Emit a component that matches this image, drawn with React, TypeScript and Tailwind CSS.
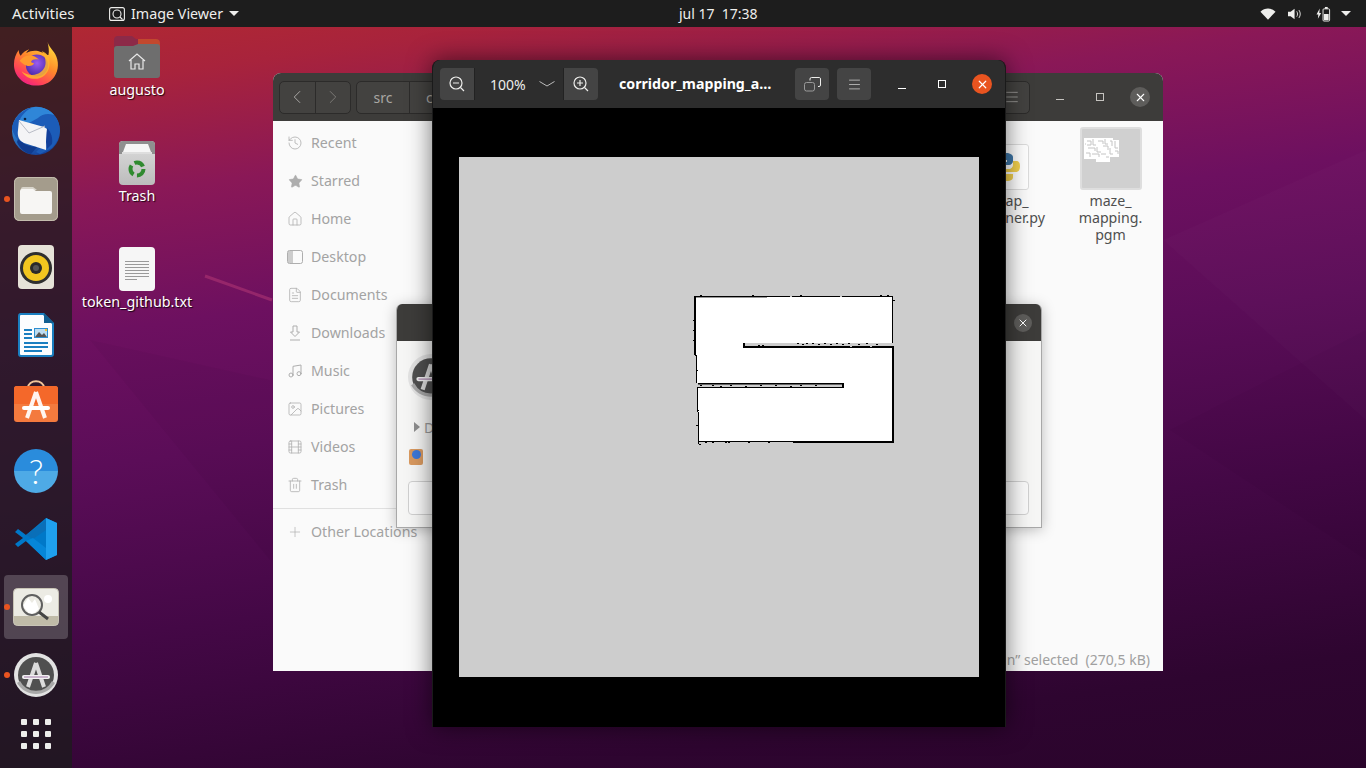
import { History, Star, Home, FileText, Music, Image as ImageIcon, Film, Trash2, Plus, ChevronLeft, ChevronRight, X, Menu } from "lucide-react";

const FONT = "font-['Noto_Sans','Liberation_Sans',sans-serif]";

function Firefox() {
  return (
    <svg width="46" height="47" viewBox="0 0 48 48">
      <defs>
        <linearGradient id="ff1" x1="0.8" y1="0" x2="0.2" y2="1"><stop offset="0" stopColor="#ffdf3d" /><stop offset="0.45" stopColor="#ff8a2a" /><stop offset="0.8" stopColor="#ff3d5c" /><stop offset="1" stopColor="#e8198f" /></linearGradient>
        <radialGradient id="ff2" cx="0.5" cy="0.4" r="0.6"><stop offset="0" stopColor="#9a5cf0" /><stop offset="1" stopColor="#4a2aa8" /></radialGradient>
      </defs>
      <path d="M36 1c1 5 5 8 8 13 4 7 4 17-1 24-5 7-12 9-19 9C11 47 1 37 1 25 1 19 3 14 6 10c0 3 1 5 2 6 2-4 6-6 9-7-2 2-3 3-3 4 5-3 11-3 15-1 4 1 7 4 8 3 1-4 0-9-1-14z" fill="url(#ff1)" />
      <circle cx="25" cy="26" r="11.5" fill="url(#ff2)" />
      <path d="M7 21c3-4 8-6 13-5 4 1 6 3 7 4-4-1-7 0-8 2-1 1 3 2 3 2-2 3-6 3-8 2-3-1-5-3-7-5z" fill="#ff9a2e" />
      <path d="M30 11c6 2 9 8 8 15-1 9-8 14-15 14-6 0-11-3-14-8 5 4 11 5 16 3 6-2 9-7 9-12 0-5-2-9-4-12z" fill="#ffb52e" opacity="0.85" />
    </svg>
  );
}

function Thunderbird() {
  return (
    <svg width="50" height="50" viewBox="0 0 50 50">
      <defs>
        <linearGradient id="tb1" x1="0.3" y1="0" x2="0.7" y2="1"><stop offset="0" stopColor="#3fa4e8" /><stop offset="1" stopColor="#123f9a" /></linearGradient>
      </defs>
      <circle cx="25" cy="25" r="24" fill="url(#tb1)" />
      <path d="M25 1c10 0 20 6 23 17 2 9-1 18-7 24-4 2-8 4-12 6l-4-2 6-6-20-3C6 34 2 28 1 22 3 10 14 1 25 1z" fill="#1c5cb8" />
      <path d="M8 17c1-7 8-14 15-16 8-1 16 3 20 8-6-2-12-1-16 3l-9 5z" fill="#2f86d8" />
      <path d="M8 14l25 7 3 2-1 21-22-7C8 35 6 30 7 24z" fill="#f4f4f6" />
      <path d="M8 15l10 12 16-7" fill="none" stroke="#b9bcc6" strokeWidth="1" />
      <path d="M36 22c4 4 6 10 5 16l-5 5-1-7z" fill="#123f9a" />
      <path d="M7 33c5 5 12 8 19 8l-6 7C13 47 8 41 6 36z" fill="#0f3b8f" />
      <circle cx="14" cy="13" r="1.3" fill="#0b2244" />
    </svg>
  );
}

function FilesIcon() {
  return (
    <svg width="44" height="44" viewBox="0 0 44 44">
      <rect x="0" y="0" width="44" height="44" rx="5" fill="#a49c8c" />
      <rect x="0.5" y="0.5" width="43" height="43" rx="5" fill="none" stroke="#c4bdae" />
      <path d="M7 12a2 2 0 0 1 2-2h10l4 3H7z" fill="#d9d5cc" />
      <path d="M6 14a2 2 0 0 1 2-2h11l3 2h14a2 2 0 0 1 2 2v19a2 2 0 0 1-2 2H8a2 2 0 0 1-2-2z" fill="#f7f6f4" />
    </svg>
  );
}

function Rhythmbox() {
  return (
    <svg width="38" height="44" viewBox="0 0 38 44">
      <rect width="36" height="44" x="1" rx="4" fill="#e6e2d8" />
      <circle cx="19" cy="23" r="16" fill="#2f2f2f" />
      <circle cx="19" cy="23" r="13" fill="#f2c61f" />
      <circle cx="19" cy="23" r="6" fill="#2a2a2a" />
      <circle cx="19" cy="23" r="3" fill="#555" />
    </svg>
  );
}

function Writer() {
  return (
    <svg width="38" height="45" viewBox="0 0 38 45">
      <path d="M3 0h24l10 10v31a3 3 0 0 1-3 3H4a3 3 0 0 1-3-3V3a3 3 0 0 1 2-3z" fill="#1a7fc0" />
      <path d="M4 2h22l9 9v30a1 1 0 0 1-1 1H4a1 1 0 0 1-1-1V3a1 1 0 0 1 1-1z" fill="#fbfdfe" />
      <path d="M27 0l10 10H27z" fill="#125f90" />
      <g fill="#1a7fc0">
        <rect x="7" y="16" width="8" height="2" /><rect x="7" y="20" width="8" height="2" /><rect x="7" y="24" width="8" height="2" />
        <rect x="7" y="29" width="24" height="2" /><rect x="7" y="33" width="24" height="2" /><rect x="7" y="37" width="18" height="2" />
      </g>
      <rect x="17" y="15" width="14" height="10" fill="#2d8fd0" />
      <rect x="18" y="16" width="12" height="8" fill="#bcdcf0" />
      <path d="M18 24l4-5 3 3 2-2 3 4z" fill="#555" />
      <rect x="28" y="16" width="2" height="2" fill="#f4c430" />
    </svg>
  );
}

function Software() {
  return (
    <svg width="44" height="44" viewBox="0 0 44 44" className="-mt-[3px]">
      <path d="M14 8c0-9 16-9 16 0" fill="none" stroke="#f2c59a" strokeWidth="2" />
      <rect y="6" width="44" height="36" rx="3" fill="#f47a3e" />
      <path d="M0 9a3 3 0 0 1 3-3h38a3 3 0 0 1 3 3v15H0z" fill="#f4682a" />
      <path d="M22 12l-9 26M22 12l9 26" stroke="#fff" strokeWidth="4" fill="none" opacity="0.92" />
      <rect x="8" y="26" width="28" height="4" rx="2" fill="#fff" />
    </svg>
  );
}

function Help() {
  return (
    <div className="w-[44px] h-[44px] rounded-full bg-[linear-gradient(#2a8cdc_0%,#2a8cdc_50%,#4eaae6_50%,#4eaae6_100%)] flex items-center justify-center text-white text-[34px] leading-none font-light font-['Lato',sans-serif]">?</div>
  );
}

function VSCode() {
  return (
    <svg width="44" height="44" viewBox="0 0 44 44">
      <path d="M32 1l11 5v32l-11 5-20-19L4 30 1 27l8-6-8-6 3-3 8 6z" fill="#0078c8" />
      <path d="M32 1l11 5v32l-11 5z" fill="#1fa0ee" />
      <path d="M12 18l20-15v10L19 22z" fill="#0a6fb8" />
      <path d="M32 31v12L12 24l7-3z" fill="#0686d8" />
    </svg>
  );
}

function Viewer() {
  return (
    <svg width="46" height="38" viewBox="0 0 46 38">
      <rect x="0.5" y="0.5" width="45" height="37" rx="4" fill="#ecebe4" stroke="#c8c4b6" />
      <path d="M1 28h44v6a3 3 0 0 1-3 3H4a3 3 0 0 1-3-3z" fill="#c0bba8" />
      <circle cx="35" cy="11" r="4" fill="#fff" />
      <path d="M10 18l5-8 4 5 3-4 4 10-8 7z" fill="#fff" />
      <circle cx="19" cy="17" r="10" fill="none" stroke="#5f5f5f" strokeWidth="2" />
      <path d="M26 24l9 7" stroke="#444" strokeWidth="3" />
    </svg>
  );
}

function Updater({ size = 44 }: { size?: number }) {
  return (
    <svg width={size} height={size} viewBox="0 0 44 44">
      <circle cx="22" cy="22" r="22" fill="#e2e2e2" />
      <circle cx="22" cy="22" r="18" fill="#505050" />
      <path d="M3 30a22 22 0 0 0 38 0l-3-2a18 18 0 0 1-32 0z" fill="#a8a8a8" />
      <path d="M22 10l-8 24M22 10l8 24" stroke="#dcdcdc" strokeWidth="4" fill="none" />
      <rect x="8" y="22" width="28" height="4" rx="2" fill="#f2f2f2" />
      <rect x="10" y="23.5" width="24" height="1" fill="#a076a6" />
    </svg>
  );
}

function GridDots() {
  return (
    <div className="grid grid-cols-3 gap-[6px]">
      {Array.from({ length: 9 }).map((_, i) => (
        <div key={i} className="w-[6px] h-[6px] rounded-[1px] bg-[#eeeeec]" />
      ))}
    </div>
  );
}

function DockItem({ children, running, active }: { children: React.ReactNode; running?: boolean; active?: boolean }) {
  return (
    <div className="relative h-[68px] w-[72px] flex items-center justify-center shrink-0">
      {active && <div className="absolute left-[4px] top-[2px] w-[64px] h-[64px] rounded-[4px] bg-white/20" />}
      {running && <div className="absolute left-[4px] top-[31px] w-[6px] h-[6px] rounded-full bg-[#e95420]" />}
      <div className="relative flex items-center justify-center">{children}</div>
    </div>
  );
}

function DesktopItem({ className, icon, label }: { className: string; icon: React.ReactNode; label: string }) {
  return (
    <div className={`absolute w-[130px] flex flex-col items-center ${className}`}>
      {icon}
      <div className="mt-[1px] text-[14.3px] leading-[18px] text-white whitespace-nowrap [text-shadow:1px_1px_1px_rgba(0,0,0,0.8)]">{label}</div>
    </div>
  );
}

function SideRow({ icon, label, className = "h-[38px]" }: { icon: React.ReactNode; label: string; className?: string }) {
  return (
    <div className={`flex items-center pl-[14px] gap-[8px] text-[14.2px] text-[#a3a3a3] whitespace-nowrap ${className}`}>
      <div className="w-[16px] h-[16px] flex items-center justify-center text-[#aeaeae]">{icon}</div>
      <span>{label}</span>
    </div>
  );
}

function MapImage() {
  const blackSpecks = [
    [700, 295], [752, 295], [800, 295], [880, 295], [887, 295], [693, 320], [693, 340], [693, 330], [695, 355], [696, 370],
    [797, 343], [802, 344], [806, 343], [812, 343], [818, 344], [824, 343], [830, 344], [836, 343], [842, 344], [848, 343], [858, 344], [866, 343], [876, 344],
    [758, 345], [762, 345], [700, 385], [712, 385], [720, 386], [730, 385], [745, 386], [760, 385], [775, 385], [790, 386], [800, 385], [815, 385],
    [705, 442], [712, 442], [725, 442], [728, 442], [748, 442], [768, 442], [699, 444], [697, 410], [696, 425], [892, 360], [893, 300],
  ];
  const greySpecks = [
    [790, 296], [840, 296], [720, 442], [760, 442], [780, 442], [850, 346], [870, 346],
  ];
  return (
    <svg width="520" height="520" viewBox="459 157 520 520" className="block">
      <rect x="459" y="157" width="520" height="520" fill="#cdcdcd" />
      <rect x="695" y="297" width="197" height="47" fill="#fff" />
      <rect x="696" y="343" width="48" height="41" fill="#fff" />
      <rect x="696" y="348" width="196" height="36" fill="#fff" />
      <rect x="844" y="383" width="48" height="6" fill="#fff" />
      <rect x="698" y="388" width="194" height="53" fill="#fff" />
      {/* outer walls */}
      <rect x="694" y="296" width="198" height="1" fill="#000" />
      <rect x="694" y="296" width="73" height="1.4" fill="#000" />
      <rect x="694" y="297" width="2" height="58" fill="#000" />
      <rect x="696" y="355" width="1" height="29" fill="#000" />
      <rect x="892" y="296" width="1" height="49" fill="#000" />
      <rect x="892" y="347" width="2" height="95" fill="#000" />
      <rect x="697" y="388" width="1" height="24" fill="#000" />
      <rect x="698" y="412" width="1" height="32" fill="#000" />
      <rect x="698" y="441" width="95" height="1" fill="#000" />
      <rect x="793" y="441" width="101" height="2" fill="#000" />
      {/* upper bar */}
      <rect x="743" y="343" width="150" height="4.5" fill="#cdcdcd" />
      <rect x="743" y="343" width="2" height="4.5" fill="#000" />
      <rect x="743" y="346" width="151" height="2" fill="#000" />
      {/* lower bar */}
      <rect x="696" y="383" width="148" height="4.5" fill="#cdcdcd" />
      <rect x="698" y="383" width="146" height="1.5" fill="#000" />
      <rect x="842" y="383" width="2" height="5" fill="#000" />
      <rect x="697" y="387" width="147" height="1" fill="#000" />
      {blackSpecks.map(([x, y], i) => (
        <rect key={i} x={x} y={y} width="2" height="1" fill="#000" />
      ))}
      {greySpecks.map(([x, y], i) => (
        <rect key={i} x={x} y={y} width="2" height="1" fill="#cdcdcd" />
      ))}
    </svg>
  );
}

function MazeThumb() {
  return (
    <div className="w-[62px] h-[63px] border-2 border-[#dedede] rounded-[3px] bg-[#d0d0d0]">
      <svg width="58" height="59" viewBox="0 0 58 59" className="block">
        <path d="M2 9h29v2h6v17H28v5H14v-3H2z" fill="#fff" />
        <g stroke="#c4c4c4" strokeWidth="1" fill="none">
          <path d="M5 12h4v4H5M11 10v6h3M16 12h5v3M23 10v5h3M28 12h2v5M33 12v7h3M6 19h7v3M15 18v5h4M21 17h5v4M28 19v6h3M4 24h4v4M10 25h7v3M19 25h5M33 22h3v3M24 28h3M3 15h1" />
        </g>
      </svg>
    </div>
  );
}

function PyThumb() {
  return (
    <div className="w-[46px] h-[46px] border border-[#dcdcdc] rounded-[3px] bg-white flex items-center justify-center">
      <svg width="30" height="30" viewBox="0 0 30 30">
        <path d="M15 1c-6 0-7 2-7 4v3h8v2H5c-3 0-4 3-4 6s1 5 4 5h3v-4c0-2 2-4 4-4h6c2 0 4-2 4-4V5c0-2-3-4-7-4z" fill="#3e77a8" />
        <path d="M15 29c6 0 7-2 7-4v-3h-8v-2h11c3 0 4-3 4-6s-1-5-4-5h-3v4c0 2-2 4-4 4h-6c-2 0-4 2-4 4v4c0 2 3 4 7 4z" fill="#f2d04e" />
      </svg>
    </div>
  );
}

function WinBtn({ children, className = "" }: { children?: React.ReactNode; className?: string }) {
  return <div className={`flex items-center justify-center ${className}`}>{children}</div>;
}

function FilesWindow() {
  return (
    <div className="absolute left-[273px] top-[73px] w-[890px] h-[598px] rounded-t-[8px] overflow-hidden bg-[#fafafa] flex flex-col">
      <div className="h-[48px] shrink-0 bg-[#3d3c3a] flex items-center px-[6px] text-[#bdbbb8]">
        <div className="flex h-[33px] w-[72px] border border-[#2c2b2a] rounded-[5px] bg-[#434240]">
          <WinBtn className="w-[36px] border-r border-[#2c2b2a]"><ChevronLeft size={22} strokeWidth={0.9} /></WinBtn>
          <WinBtn className="w-[35px] text-[#85837f]"><ChevronRight size={22} strokeWidth={0.9} /></WinBtn>
        </div>
        <div className="flex h-[33px] ml-[5px] border border-[#2c2b2a] rounded-[5px] bg-[#434240] text-[14px] text-[#a9a7a4]">
          <div className="w-[53px] flex items-center justify-center border-r border-[#2c2b2a]">src</div>
          <div className="w-[50px] flex items-center pl-[16px]">c</div>
        </div>
        <div className="ml-auto flex items-center">
          <WinBtn className="w-[36px] h-[33px] border border-[#2c2b2a] rounded-[5px] bg-[#434240]"><Menu size={16} strokeWidth={1} /></WinBtn>
          <WinBtn className="ml-[25px] w-[10px] h-[33px] pt-[4px]"><div className="w-[8px] h-[1px] bg-[#c6c4c0]" /></WinBtn>
          <WinBtn className="ml-[30px] w-[10px] h-[33px]"><div className="w-[8px] h-[8px] border border-[#c6c4c0]" /></WinBtn>
          <WinBtn className="ml-[25px] mr-[7px] w-[20px] h-[20px] rounded-full bg-[#5e5d5b] text-white"><X size={13} strokeWidth={2} /></WinBtn>
        </div>
      </div>
      <div className="flex-1 flex min-h-0">
        <div className="w-[165px] shrink-0 pt-[3px] flex flex-col">
          <SideRow icon={<History size={16} strokeWidth={1.2} />} label="Recent" />
          <SideRow icon={<Star size={15} strokeWidth={1} fill="currentColor" />} label="Starred" />
          <SideRow icon={<Home size={16} strokeWidth={1.2} />} label="Home" />
          <SideRow icon={<svg width="16" height="14" viewBox="0 0 16 14"><rect x="0.5" y="0.5" width="15" height="13" rx="2" fill="none" stroke="currentColor" /><path d="M1 1h5v12H1z" fill="currentColor" opacity="0.6" /></svg>} label="Desktop" />
          <SideRow icon={<FileText size={16} strokeWidth={1.2} />} label="Documents" />
          <SideRow icon={<svg width="14" height="16" viewBox="0 0 14 16" fill="none" stroke="currentColor"><path d="M5 1h4v6h2.5L7 11.5 2.500 7H5zM2 15h10" /></svg>} label="Downloads" />
          <SideRow icon={<Music size={16} strokeWidth={1.5} />} label="Music" />
          <SideRow icon={<ImageIcon size={16} strokeWidth={1.2} />} label="Pictures" />
          <SideRow icon={<Film size={16} strokeWidth={1.2} />} label="Videos" />
          <SideRow icon={<Trash2 size={16} strokeWidth={1.2} />} label="Trash" />
          <div className="mt-[4px] h-px bg-[#e0e0e0]" />
          <SideRow icon={<Plus size={16} strokeWidth={1} />} label="Other Locations" className="h-[46px]" />
        </div>
        <div className="flex-1 flex flex-col min-w-0">
          <div className="flex-1 flex justify-end pt-[6px]">
            <div className="w-[105px] flex flex-col items-center">
              <div className="h-[63px] flex items-end"><PyThumb /></div>
              <div className="mt-[2px] ml-[10px] text-center text-[14.2px] leading-[17px] text-[#4f4f4f]">
                <div>map_</div>
                <div>planner.py</div>
              </div>
            </div>
            <div className="w-[105px] flex flex-col items-center">
              <div className="h-[63px] flex items-end"><MazeThumb /></div>
              <div className="mt-[2px] text-center text-[14.2px] leading-[17px] text-[#4f4f4f]">
                <div>maze_</div>
                <div>mapping.</div>
                <div>pgm</div>
              </div>
            </div>
          </div>
          <div className="h-[23px] shrink-0 flex items-start justify-end pr-[13px] text-[14px] leading-[23px] text-[#a0a0a0] whitespace-pre">
            n” selected  (270,5 kB)
          </div>
        </div>
      </div>
    </div>
  );
}

function Dialog() {
  return (
    <div className="absolute left-[396px] top-[304px] w-[646px] h-[224px] rounded-t-[6px] overflow-hidden bg-[#f6f6f5] border border-[#a8a8a8] border-t-0 shadow-[0_2px_14px_rgba(0,0,0,0.25)] flex flex-col">
      <div className="h-[37px] shrink-0 bg-[#3d3c3a] flex items-center justify-end pr-[9px]">
        <div className="w-[18px] h-[18px] rounded-full bg-[#5e5d5b] text-white flex items-center justify-center"><X size={12} strokeWidth={2} /></div>
      </div>
      <div className="flex-1 pl-[11px] pr-[12px] pt-[13px] flex flex-col">
        <Updater size={46} />
        <div className="mt-[17px] flex items-center h-[20px] text-[14px] text-[#9c9c9c]">
          <div className="ml-[6px] w-0 h-0 border-y-[5px] border-y-transparent border-l-[6px] border-l-[#8f8f8f]" />
          <span className="ml-[4px]">Details</span>
        </div>
        <div className="mt-[12px] ml-[1px] w-[14px] h-[16px] rounded-[2px] bg-[#d9995f] flex items-start justify-center pt-px">
          <div className="w-[9px] h-[9px] rounded-full bg-[#3d78d8]" />
        </div>
        <div className="mt-[16px] h-[34px] rounded-[4px] border border-[#d0d0d0] bg-[#fafafa]" />
      </div>
    </div>
  );
}

function ViewerWindow() {
  return (
    <div className="absolute left-[432px] top-[60px] w-[574px] h-[667px] rounded-t-[8px] overflow-hidden flex flex-col shadow-[0_0_24px_rgba(0,0,0,0.55)] bg-black border-x border-[#1a1a1a]">
      <div className="h-[48px] shrink-0 bg-[#2d2d2d] flex items-center pl-[7px] text-[#eeeeec]">
        <div className="flex h-[32px] w-[158px] rounded-[4px] overflow-hidden text-[14px]">
          <WinBtn className="w-[35px] bg-[#444444] border-r border-[#222]">
            <svg width="18" height="18" viewBox="0 0 18 18" fill="none" stroke="currentColor" strokeWidth="1.2"><circle cx="8" cy="8" r="6" /><path d="M5 8h6M12.500 12.500L16 16" /></svg>
          </WinBtn>
          <div className="w-[88px] flex items-center justify-between pl-[15px] pr-[8px]">
            <span>100%</span>
            <svg width="16" height="6" viewBox="0 0 16 6" fill="none" stroke="#bbbbbb"><path d="M0.500 0.500L8 5l7.500-4.500" /></svg>
          </div>
          <WinBtn className="w-[35px] bg-[#444444] border-l border-[#222]">
            <svg width="18" height="18" viewBox="0 0 18 18" fill="none" stroke="currentColor" strokeWidth="1.2"><circle cx="8" cy="8" r="6" /><path d="M5 8h6M8 5v6M12.500 12.500L16 16" /></svg>
          </WinBtn>
        </div>
        <div className="ml-[21px] w-[155px] -mt-[1px] text-[14.2px] font-bold text-white whitespace-nowrap">corridor_mapping_a…</div>
        <WinBtn className="ml-[21px] w-[34px] h-[32px] bg-[#444444] rounded-[4px]">
          <svg width="17" height="15" viewBox="0 0 17 15" fill="none"><path d="M6 3.500V2a1.500 1.500 0 0 1 1.500-1.500h8A1.500 1.500 0 0 1 16.500 2v6A1.500 1.500 0 0 1 15 9.500h-1" stroke="#eeeeec" /><rect x="0.500" y="5.500" width="10" height="8.500" rx="2" stroke="#9a9a9a" /></svg>
        </WinBtn>
        <WinBtn className="ml-[8px] w-[34px] h-[32px] bg-[#444444] rounded-[4px]">
          <Menu size={15} strokeWidth={1} />
        </WinBtn>
        <WinBtn className="ml-[26px] w-[10px] h-[20px] pt-[8px]"><div className="w-[8px] h-[1px] bg-white" /></WinBtn>
        <WinBtn className="ml-[30px] w-[10px] h-[20px]"><div className="w-[8px] h-[8px] border border-white" /></WinBtn>
        <WinBtn className="ml-[25px] w-[20px] h-[20px] rounded-full bg-[#e95420] text-white"><X size={13} strokeWidth={2.2} /></WinBtn>
      </div>
      <div className="flex-1 bg-black flex items-center justify-center pb-[1px]">
        <MapImage />
      </div>
    </div>
  );
}

export default function App() {
  return (
    <div className={`relative w-[1366px] h-[768px] overflow-hidden ${FONT} bg-[linear-gradient(172deg,#b52b2d_0%,#a8233c_10%,#8a1857_22%,#6d1060_36%,#5b0d58_50%,#440846_68%,#2e0530_88%,#2a042b_100%)]`}>
      {/* Wallpaper streaks */}
      <svg width="1366" height="768" className="absolute inset-0">
        <path d="M205 276L272 300" stroke="#c2417a" strokeOpacity="0.45" strokeWidth="3" />
        <path d="M1163 240L1366 150V420Z" fill="#fff" fillOpacity="0.015" />
        <path d="M90 340L270 380 270 560Z" fill="#000" fillOpacity="0.03" />
        <path d="M1170 430L1366 330V560Z" fill="#000" fillOpacity="0.025" />
      </svg>

      <DesktopItem
        className="left-[72px] top-[36px]"
        label="augusto"
        icon={
          <svg width="46" height="42" viewBox="0 0 46 42" className="mb-[2px]">
            <path d="M0 4a4 4 0 0 1 4-4h14l4 3h20a4 4 0 0 1 4 4v6H0z" fill="#8c2a48" />
            <path d="M24 3h18a4 4 0 0 1 4 4v6H24z" fill="#c2482e" />
            <path d="M0 13a3 3 0 0 1 3-3h16l5-2h19a3 3 0 0 1 3 3v28a3 3 0 0 1-3 3H3a3 3 0 0 1-3-3z" fill="#6e6e6e" />
            <path d="M15 25l8-7 8 7M17 24v9h4v-5h4v5h4v-9" fill="none" stroke="#e8e8e8" strokeWidth="1.2" />
          </svg>
        }
      />
      <DesktopItem
        className="left-[72px] top-[141px]"
        label="Trash"
        icon={
          <svg width="36" height="45" viewBox="0 0 36 45">
            <defs><linearGradient id="tr" x1="0" y1="0" x2="0" y2="1"><stop offset="0" stopColor="#dcdcdc" /><stop offset="1" stopColor="#bcbcbc" /></linearGradient></defs>
            <rect width="36" height="44" rx="4" fill="url(#tr)" />
            <path d="M0 4a4 4 0 0 1 4-4h28a4 4 0 0 1 4 4v9H0z" fill="#8f8f8f" />
            <path d="M4 11l3-8h22l3 8z" fill="#f6f6f6" />
            <rect x="3" y="11" width="30" height="2" fill="#dedede" />
            <circle cx="18" cy="28" r="6.500" fill="none" stroke="#2f8a2f" strokeWidth="4" strokeDasharray="10 3.600" />
          </svg>
        }
      />
      <DesktopItem
        className="left-[72px] top-[247px]"
        label="token_github.txt"
        icon={
          <svg width="36" height="45" viewBox="0 0 36 45">
            <rect width="36" height="44" rx="4" fill="#f6f6f6" />
            <g stroke="#9a9a9a"><path d="M6 14.500h24M6 17.500h24M6 20.500h24M6 23.500h24M6 26.500h24M6 29.500h24M6 32.500h12" /></g>
          </svg>
        }
      />

      <FilesWindow />
      <Dialog />
      <ViewerWindow />

      {/* Dock */}
      <div className="absolute left-0 top-[27px] bottom-0 w-[72px] bg-[#1c1c1c]/75 flex flex-col pt-[2px]">
        <DockItem><Firefox /></DockItem>
        <DockItem><Thunderbird /></DockItem>
        <DockItem running><FilesIcon /></DockItem>
        <DockItem><Rhythmbox /></DockItem>
        <DockItem><Writer /></DockItem>
        <DockItem><Software /></DockItem>
        <DockItem><Help /></DockItem>
        <DockItem><VSCode /></DockItem>
        <DockItem running active><Viewer /></DockItem>
        <DockItem running><Updater /></DockItem>
        <div className="h-[50px] flex items-center justify-center"><GridDots /></div>
      </div>

      {/* Top bar */}
      <div className="absolute left-0 top-0 w-full h-[27px] bg-[#1d1d1d] flex items-center text-[14.3px] text-[#eeeeec]">
        <div className="pl-[12px] w-[109px] text-[15px]">Activities</div>
        <svg width="16" height="14" viewBox="0 0 16 14" fill="none" stroke="#eeeeec" strokeWidth="1.1">
          <rect x="0.600" y="0.600" width="14.800" height="12.800" rx="2" /><circle cx="8" cy="7" r="4" /><path d="M11 10l2.500 2.500" />
        </svg>
        <span className="ml-[6px]">Image Viewer</span>
        <div className="ml-[6px] w-0 h-0 border-x-[5px] border-x-transparent border-t-[5px] border-t-[#eeeeec]" />
        <span className="absolute left-[679px] text-[14px] whitespace-pre">jul 17  17:38</span>
        <div className="ml-auto flex items-center pr-[15px]">
          <svg width="16" height="14" viewBox="0 0 17 14"><path d="M8.500 13L0.500 4.500C5 0 12 0 16.500 4.500Z" fill="#eeeeec" /></svg>
          <svg className="ml-[12px]" width="14" height="14" viewBox="0 0 16 14" fill="#eeeeec"><path d="M0 4.500h3L7.500 1v12L3 9.500H0z" /><path d="M10 4c1.200 1.800 1.200 4.200 0 6M12.500 2.500c2 2.800 2 6.200 0 9" fill="none" stroke="#eeeeec" /></svg>
          <svg className="ml-[14px]" width="15" height="16" viewBox="0 0 16 16" fill="none"><path d="M4 2L0.500 8.500h2L2 13l3.500-6h-2z" fill="#eeeeec" /><rect x="7.500" y="2.500" width="7" height="13" rx="1" stroke="#eeeeec" /><rect x="9.500" y="0.500" width="3" height="2" fill="#eeeeec" /><rect x="8.500" y="8" width="5" height="6.500" fill="#eeeeec" /></svg>
          <div className="ml-[10px] w-0 h-0 border-x-[5px] border-x-transparent border-t-[5px] border-t-[#eeeeec]" />
        </div>
      </div>
    </div>
  );
}
